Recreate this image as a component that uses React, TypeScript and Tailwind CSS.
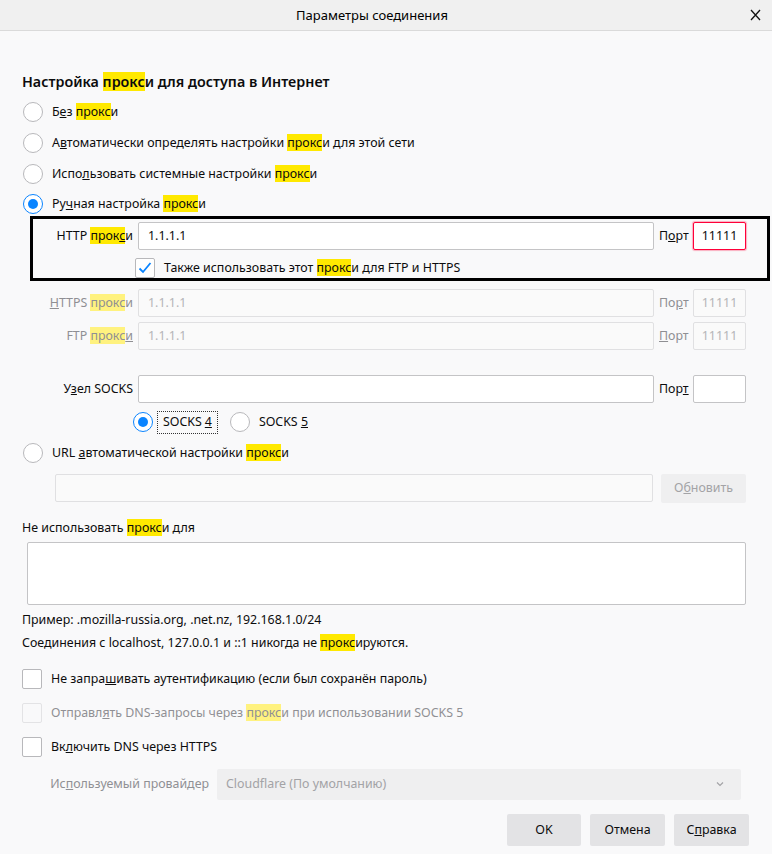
import React from "react";

const H = ({ children, dim }: { children: React.ReactNode; dim?: boolean }) => (
  <span className={dim ? "bg-[#fff27f]" : "bg-[#ffe900]"}>{children}</span>
);

function Radio({ checked }: { checked?: boolean }) {
  return (
    <span
      className={
        checked
          ? "w-[20px] h-[20px] rounded-full border border-[#0a84ff] bg-white flex items-center justify-center shrink-0"
          : "w-[20px] h-[20px] rounded-full border border-[#b8b8bb] bg-white flex items-center justify-center shrink-0"
      }
    >
      {checked && <span className="w-[10px] h-[10px] rounded-full bg-[#0a84ff]" />}
    </span>
  );
}

function Check({ checked, disabled }: { checked?: boolean; disabled?: boolean }) {
  return (
    <span
      className={
        disabled
          ? "w-[20px] h-[20px] rounded-[2px] border border-[#e3e3e5] bg-[#f9f9fa] flex items-center justify-center shrink-0"
          : "w-[20px] h-[20px] rounded-[2px] border border-[#b8b8bb] bg-white flex items-center justify-center shrink-0"
      }
    >
      {checked && (
        <svg width="16" height="16" viewBox="0 0 16 16">
          <path d="M2.5 8.5 L6 12 L13.5 3" fill="none" stroke="#0a84ff" strokeWidth="1.8" />
        </svg>
      )}
    </span>
  );
}

function ProxyRow({
  label,
  value,
  port,
  portLabel,
  disabled,
  labelW,
  red,
}: {
  label: React.ReactNode;
  value: string;
  port: string;
  portLabel: React.ReactNode;
  disabled?: boolean;
  labelW: string;
  red?: boolean;
}) {
  const inputCls = disabled
    ? "h-[28px] border border-[#e0e0e2] rounded-[2px] bg-[#fafafa] text-[#b5b5b8] flex items-center"
    : "h-[28px] border border-[#c4c4c6] rounded-[2px] bg-white text-[#0c0c0d] flex items-center";
  const portCls = red
    ? "h-[28px] border border-[#ff0039] rounded-[2px] bg-white text-[#0c0c0d] flex items-center justify-center shadow-[0_0_1px_1px_rgba(255,0,57,0.3)]"
    : inputCls + " justify-center";
  return (
    <div className="flex items-center h-[28px]">
      <div className={labelW + (disabled ? " text-right text-[#8f8f93]" : " text-right")}>{label}</div>
      <div className={inputCls + " ml-[5px] w-[516px] pl-[9px]"}>{value}</div>
      <div className={disabled ? "ml-[5px] w-[31px] text-[#8f8f93]" : "ml-[5px] w-[31px]"}>{portLabel}</div>
      <div className={portCls + " ml-[3px] w-[53px]"}>{port}</div>
    </div>
  );
}

export default function App() {
  return (
    <div className="w-[772px] h-[854px] overflow-hidden bg-[#f9f9fa] text-[#0c0c0d] font-['Noto_Sans','Open_Sans',sans-serif] text-[12.4px] leading-[20px]">
      {/* title bar */}
      <div className="h-[31px] bg-[#f0f0f0] border-b border-[#dadada] flex items-center relative">
        <div className="flex-1 text-center text-[13px] text-black pr-[28px]">Параметры соединения</div>
        <svg className="absolute left-[750px] top-[9px]" width="11" height="12" viewBox="0 0 11 12">
          <path d="M1 1 L10 11 M10 1 L1 11" stroke="#111" strokeWidth="1.3" fill="none" />
        </svg>
      </div>

      <div className="flex flex-col">
        <div className="mt-[41px] h-[20px] pl-[22px] text-[14.3px] font-semibold leading-[20px]">
          Настройка <H>прокс</H>и для доступа в Интернет
        </div>

        <div className="mt-[4px] flex flex-col pl-[23px]">
          <div className="h-[31px] flex items-center gap-[9px]">
            <Radio />
            <span>
              Б<u>е</u>з <H>прокс</H>и
            </span>
          </div>
          <div className="h-[31px] flex items-center gap-[9px]">
            <Radio />
            <span>
              А<u>в</u>томатически определять настройки <H>прокс</H>и для этой сети
            </span>
          </div>
          <div className="h-[31px] flex items-center gap-[9px]">
            <Radio />
            <span>
              Испо<u>л</u>ьзовать системные настройки <H>прокс</H>и
            </span>
          </div>
          <div className="mt-[5px] h-[20px] flex items-center gap-[9px]">
            <Radio checked />
            <span>
              Ру<u>ч</u>ная настройка <H>прокс</H>и
            </span>
          </div>
        </div>

        {/* highlighted box */}
        <div className="mt-[2px] ml-[30px] w-[740px] h-[65px] border-[3px] border-black flex flex-col">
          <div className="mt-[3px]">
            <ProxyRow
              labelW="w-[100px]"
              label={
                <>
                  HTTP <H>прок</H>
                  <H>
                    <u>с</u>
                  </H>
                  и
                </>
              }
              value="1.1.1.1"
              port="11111"
              portLabel={
                <>
                  П<u>о</u>рт
                </>
              }
              red
            />
          </div>
          <div className="mt-[8px] h-[20px] flex items-center pl-[102px] gap-[9px]">
            <Check checked />
            <span>
              Также использовать этот <H>прокс</H>и <u>д</u>ля FTP и HTTPS
            </span>
          </div>
        </div>

        <div className="mt-[8px]">
          <ProxyRow
            disabled
            labelW="w-[133px]"
            label={
              <>
                <u>H</u>TTPS <H dim>прокс</H>и
              </>
            }
            value="1.1.1.1"
            port="11111"
            portLabel={
              <>
                По<u>р</u>т
              </>
            }
          />
        </div>
        <div className="mt-[5px]">
          <ProxyRow
            disabled
            labelW="w-[133px]"
            label={
              <>
                FTP <H dim>прокс</H>
                <u>и</u>
              </>
            }
            value="1.1.1.1"
            port="11111"
            portLabel={
              <>
                <u>П</u>орт
              </>
            }
          />
        </div>
        <div className="mt-[25px]">
          <ProxyRow
            labelW="w-[133px]"
            label={
              <>
                У<u>з</u>ел SOCKS
              </>
            }
            value=""
            port=""
            portLabel={
              <>
                Пор<u>т</u>
              </>
            }
          />
        </div>

        <div className="mt-[9px] h-[20px] flex items-center pl-[133px]">
          <Radio checked />
          <span className="ml-[4px] px-[5px] h-[23px] flex items-center border border-dotted border-[#333]">
            SOCKS <u className="ml-[3px]">4</u>
          </span>
          <span className="ml-[12px]">
            <Radio />
          </span>
          <span className="ml-[9px]">
            SOCKS <u>5</u>
          </span>
        </div>

        <div className="mt-[11px] h-[20px] flex items-center pl-[23px] gap-[9px]">
          <Radio />
          <span>
            URL <u>а</u>втоматической настройки <H>прокс</H>и
          </span>
        </div>

        <div className="mt-[11px] h-[28px] flex items-center pl-[55px]">
          <div className="w-[598px] h-[28px] border border-[#e0e0e2] rounded-[2px] bg-[#fafafa]" />
          <div className="ml-[8px] w-[85px] h-[29px] rounded-[2px] bg-[#efeff0] text-[#a3a3a6] flex items-center justify-center">
            О<u>б</u>новить
          </div>
        </div>

        <div className="mt-[16px] h-[20px] pl-[22px]">
          Не использовать <H>прокс</H>и для
        </div>
        <div className="mt-[4px] ml-[27px] w-[719px] h-[63px] border border-[#c4c4c6] rounded-[2px] bg-white" />

        <div className="mt-[5px] h-[20px] pl-[22px]">Пример: .mozilla-russia.org, .net.nz, 192.168.1.0/24</div>
        <div className="mt-[3px] h-[20px] pl-[22px]">
          Соединения с localhost, 127.0.0.1 и ::1 никогда не <H>прокс</H>ируются.
        </div>

        <div className="mt-[16px] h-[20px] flex items-center pl-[22px] gap-[9px]">
          <Check />
          <span>
            Не запра<u>ш</u>ивать аутентификацию (если был сохранён пароль)
          </span>
        </div>
        <div className="mt-[14px] h-[20px] flex items-center pl-[22px] gap-[9px] text-[#909094]">
          <Check disabled />
          <span>
            Отправл<u>я</u>ть DNS-запросы через <H dim>прокс</H>и при использовании SOCKS 5
          </span>
        </div>
        <div className="mt-[14px] h-[20px] flex items-center pl-[22px] gap-[9px]">
          <Check />
          <span>
            Вк<u>л</u>ючить DNS через HTTPS
          </span>
        </div>

        <div className="mt-[12px] h-[30px] flex items-center">
          <div className="w-[209px] text-right text-[#909094]">
            Ис<u>п</u>ользуемый провайдер
          </div>
          <div className="ml-[8px] w-[524px] h-[31px] rounded-[2px] bg-[#efeff0] text-[#a3a3a6] flex items-center pl-[9px] pr-[17px] justify-between">
            <span>Cloudflare (По умолчанию)</span>
            <svg width="8" height="6" viewBox="0 0 8 6">
              <path d="M1 1.5 L4 4.5 L7 1.5" fill="none" stroke="#a3a3a6" strokeWidth="1.2" />
            </svg>
          </div>
        </div>

        <div className="mt-[15px] h-[32px] flex justify-end pr-[23px] gap-[9px]">
          <div className="w-[74px] h-[32px] rounded-[2px] bg-[#e3e3e5] flex items-center justify-center">OK</div>
          <div className="w-[75px] h-[32px] rounded-[2px] bg-[#e3e3e5] flex items-center justify-center">Отмена</div>
          <div className="w-[75px] h-[32px] rounded-[2px] bg-[#e3e3e5] flex items-center justify-center">
            С<u>п</u>равка
          </div>
        </div>
      </div>
    </div>
  );
}
